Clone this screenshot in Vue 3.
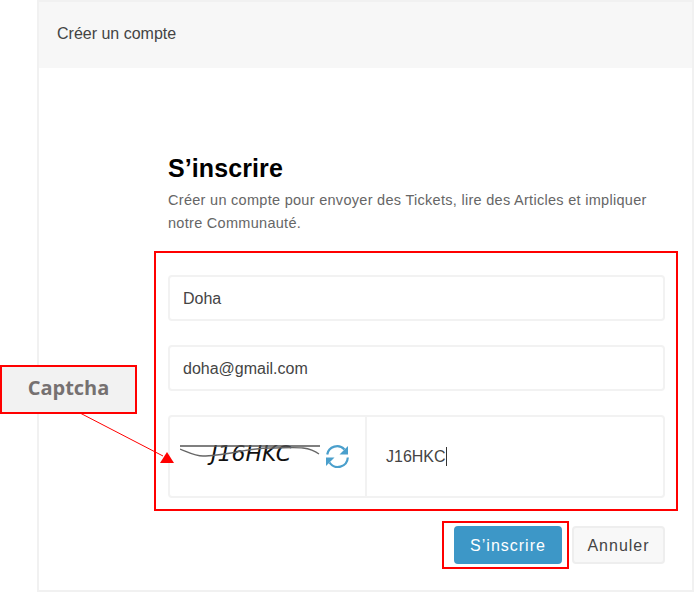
<template>
    <div class="page">
        <div class="card">
            <div class="card-header">Créer un compte</div>
            <div class="card-body">
                <h1 class="title">S’inscrire</h1>
                <p class="desc">Créer un compte pour envoyer des Tickets, lire des Articles et impliquer notre Communauté.</p>
                <form class="form" @submit.prevent>
                    <input class="field" v-model="name" />
                    <input class="field" v-model="email" />
                    <div class="captcha-row">
                        <div class="captcha-cell">
                            <svg class="captcha-img" width="140" height="30" viewBox="0 0 140 30">
                                <text x="31" y="23" class="captcha-text">J16HKC</text>
                                <path d="M0 8H140" stroke="#555" stroke-width="1.300" fill="none" />
                                <path d="M0 11C8 14 15 18 23 18S45 16 57 14 78 10 90 10 115 9 123 10 135 13 139 16" stroke="#666" stroke-width="1.300" fill="none" />
                            </svg>
                            <svg class="refresh" width="24" height="24" viewBox="0 0 24 24">
                                <path d="M2.200 10.500A10 10 0 0 1 19.500 5.500" stroke="#4a9fcc" stroke-width="2.200" fill="none" />
                                <path d="M22.800 13.500A10 10 0 0 1 4.500 18.500" stroke="#4a9fcc" stroke-width="2.200" fill="none" />
                                <path d="M23 2V10.500H14.500Z" fill="#4a9fcc" />
                                <path d="M1 22V13.500H9.500Z" fill="#4a9fcc" />
                            </svg>
                        </div>
                        <div class="captcha-input"><span>J16HKC</span><i class="caret"></i></div>
                    </div>
                    <div class="actions">
                        <button class="btn btn-primary" type="submit">S’inscrire</button>
                        <button class="btn" type="button">Annuler</button>
                    </div>
                </form>
            </div>
        </div>

        <!-- annotations over the screenshot -->
        <div class="mark mark-form"></div>
        <div class="mark mark-btn"></div>
        <div class="callout">Captcha</div>
        <svg class="arrow" width="695" height="593" viewBox="0 0 695 593">
            <path d="M80 413L163 456" stroke="#f00" stroke-width="1" fill="none" />
            <path d="M167 452L174 463H160Z" fill="#f00" />
        </svg>
    </div>
</template>
<script setup>
import { ref } from 'vue'
const name = ref('Doha')
const email = ref('doha@gmail.com')
</script>
<style>
html, body {
    background: #fff;
    overflow: hidden;
}
</style>
<style scoped>
.page {
    position: relative;
    width: 695px;
    height: 593px;
    overflow: hidden;
    font-family: "Liberation Sans", Arial, sans-serif;
    color: #444;
}

.card {
    box-sizing: border-box;
    margin-left: 37px;
    width: 657px;
    height: 592px;
    border: 2px solid #f1f1f1;
}

.card-header {
    height: 66px;
    line-height: 64px;
    padding-left: 18px;
    background: #f7f7f7;
    font-size: 16px;
}

.card-body {
    padding: 85px 27px 0 129px;
}

.title {
    margin: 0;
    font-size: 25px;
    line-height: 30px;
    font-weight: bold;
    color: #000;
    letter-spacing: 0.1px;
}

.desc {
    margin: 6px 0 0;
    font-size: 14.5px;
    line-height: 23px;
    letter-spacing: 0.29px;
    color: #666;
}

.form {
    margin-top: 40px;
}

.field {
    display: block;
    box-sizing: border-box;
    width: 100%;
    height: 46px;
    margin-bottom: 24px;
    padding: 2px 13px 0;
    border: 2px solid #f2f2f2;
    border-radius: 4px;
    background: #fff;
    font: 16px "Liberation Sans", Arial, sans-serif;
    color: #444;
    outline: none;
}

.captcha-row {
    display: flex;
    box-sizing: border-box;
    height: 83px;
    border: 2px solid #f2f2f2;
    border-radius: 4px;
}

.captcha-cell {
    display: flex;
    align-items: flex-start;
    width: 197px;
    padding: 21px 0 0 10px;
    box-sizing: border-box;
    border-right: 2px solid #f2f2f2;
}

.captcha-img {
    flex: none;
}

.captcha-text {
    font: italic 22px "DejaVu Sans", sans-serif;
    fill: #111;
    letter-spacing: 0;
}

.refresh {
    flex: none;
    margin: 6px 0 0 5px;
}

.captcha-input {
    display: flex;
    align-items: center;
    padding: 0 0 0 19px;
    box-sizing: border-box;
    height: 79px;
    font-size: 16px;
}

.caret {
    display: block;
    width: 1px;
    height: 19px;
    background: #333;
}

.actions {
    display: flex;
    justify-content: flex-end;
    gap: 10px;
    margin-top: 28px;
}

.btn {
    box-sizing: border-box;
    height: 38px;
    width: 93px;
    padding-top: 2px;
    border: 2px solid #eee;
    border-radius: 4px;
    background: #f8f8f8;
    font: 16px "Liberation Sans", Arial, sans-serif;
    letter-spacing: 1px;
    color: #444;
}

.btn-primary {
    width: 108px;
    border-color: #3d97c7;
    background: #3d97c7;
    color: #fff;
}

.mark {
    position: absolute;
    box-sizing: border-box;
    border: 2px solid #f00;
}

.mark-form {
    left: 154px;
    top: 251px;
    width: 524px;
    height: 260px;
}

.mark-btn {
    left: 442px;
    top: 521px;
    width: 127px;
    height: 48px;
}

.callout {
    position: absolute;
    left: 0;
    top: 365px;
    box-sizing: border-box;
    width: 137px;
    height: 49px;
    border: 2px solid #f00;
    background: #f2f2f2;
    font: bold 20px "Open Sans", sans-serif;
    line-height: 41px;
    text-align: center;
    color: #767171;
}

.arrow {
    position: absolute;
    left: 0;
    top: 0;
    pointer-events: none;
}
</style>
